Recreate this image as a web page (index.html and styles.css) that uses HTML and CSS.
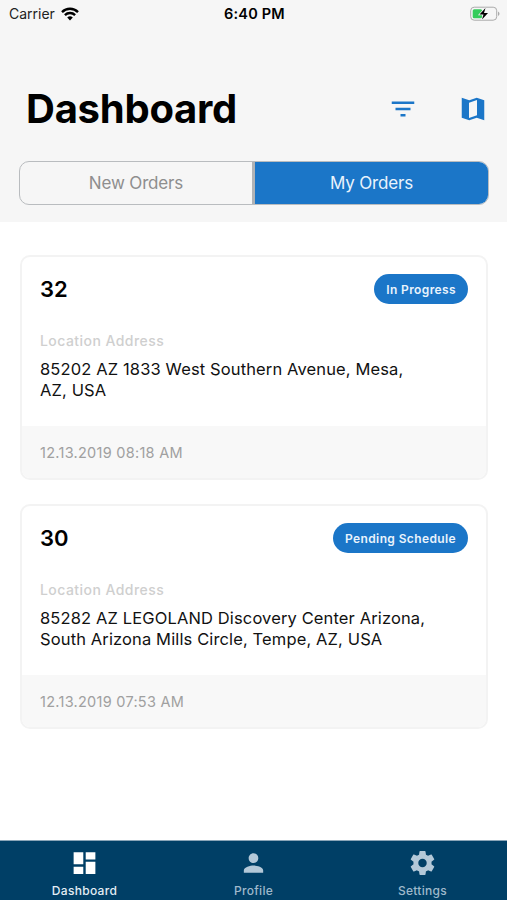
FILE: index.html
```html
<!DOCTYPE html>
<html lang="en">
<head>
  <meta charset="UTF-8">
  <meta name="viewport" content="width=device-width, initial-scale=1.0">
  <title>Dashboard</title>
  <link rel="stylesheet" href="styles.css">
</head>
<body>

  <header class="header">
    <div class="status-bar">
      <div class="carrier">
        <span>Carrier</span>
        <svg class="wifi" viewBox="0 0 18 14">
          <path d="M9 13.6 6.2 10.6a4.2 4.2 0 0 1 5.6 0z"/>
          <path class="arc" d="M3.9 8.1a7.3 7.3 0 0 1 10.2 0M1 5.1a11.4 11.4 0 0 1 16 0"/>
        </svg>
      </div>
      <div class="time">6:40 PM</div>
      <div class="power">
        <svg class="battery" viewBox="0 0 30 16">
          <rect x=".7" y="1.2" width="26" height="13" rx="3.5" fill="none" stroke="#aaa"/>
          <path d="M28 5.5c2 .8 2 3.6 0 4.4z" fill="#aaa"/>
          <rect x="2.7" y="3.2" width="9.5" height="9" rx="1.5" fill="#35cc5b"/>
          <path d="M15.5 2 9.5 8.5h4L12 13.5l6-6.5h-4z" fill="#000" stroke="#f6f6f6" stroke-width="1.4" paint-order="stroke"/>
        </svg>
      </div>
    </div>

    <div class="title-row">
      <h1>Dashboard</h1>
      <div class="actions">
        <svg class="icon" viewBox="0 0 24 24"><path d="M10 18h4v-2h-4v2zM3 6v2h18V6H3zm3 7h12v-2H6v2z"/></svg>
        <svg class="icon" viewBox="0 0 24 24"><path d="M3 3 9 5l6-2 6 2v16l-6-2-6 2-6-2zM8.8 6.9v12.2l6.4-2.1V4.8z" fill-rule="evenodd"/></svg>
      </div>
    </div>

    <div class="tabs">
      <div class="tab">New Orders</div>
      <div class="tab active">My Orders</div>
    </div>
  </header>

  <main class="orders">
    <div class="card">
      <div class="card-body">
        <div class="card-top">
          <h2>32</h2>
          <span class="badge">In Progress</span>
        </div>
        <div class="label">Location Address</div>
        <div class="address">85202 AZ 1833 West Southern Avenue, Mesa,<br>AZ, USA</div>
      </div>
      <div class="card-footer">12.13.2019 08:18 AM</div>
    </div>

    <div class="card">
      <div class="card-body">
        <div class="card-top">
          <h2>30</h2>
          <span class="badge">Pending Schedule</span>
        </div>
        <div class="label">Location Address</div>
        <div class="address">85282 AZ LEGOLAND Discovery Center Arizona,<br>South Arizona Mills Circle, Tempe, AZ, USA</div>
      </div>
      <div class="card-footer">12.13.2019 07:53 AM</div>
    </div>
  </main>

  <nav class="nav">
    <div class="nav-item active">
      <svg viewBox="0 0 24 24"><path d="M3 13h8V3H3v10zm0 8h8v-6H3v6zm10 0h8V11h-8v10zm0-18v6h8V3h-8z"/></svg>
      <span>Dashboard</span>
    </div>
    <div class="nav-item">
      <svg viewBox="0 0 24 24"><path d="M12 12c2.210 0 4-1.790 4-4s-1.790-4-4-4-4 1.790-4 4 1.790 4 4 4zm0 2c-2.670 0-8 1.340-8 4v2h16v-2c0-2.660-5.330-4-8-4z"/></svg>
      <span>Profile</span>
    </div>
    <div class="nav-item">
      <svg viewBox="0 0 24 24"><path d="M19.430 12.980c.04-.32.07-.64.07-.98s-.03-.66-.07-.98l2.110-1.650c.19-.15.24-.42.12-.64l-2-3.460c-.12-.22-.39-.3-.61-.22l-2.490 1c-.52-.4-1.080-.73-1.690-.98l-.38-2.650C14.460 2.180 14.250 2 14 2h-4c-.25 0-.46.18-.49.42l-.38 2.650c-.61.25-1.170.59-1.690.98l-2.490-1c-.23-.09-.49 0-.61.22l-2 3.460c-.13.22-.07.49.12.64l2.110 1.650c-.04.32-.07.65-.07.98s.03.66.07.98l-2.110 1.650c-.19.15-.24.42-.12.64l2 3.460c.12.22.39.3.61.22l2.490-1c.52.4 1.080.73 1.690.98l.38 2.650c.03.24.24.42.49.42h4c.25 0 .46-.18.49-.42l.38-2.650c.61-.25 1.170-.59 1.690-.98l2.490 1c.23.09.49 0 .61-.22l2-3.460c.12-.22.07-.49-.12-.64l-2.110-1.650zM12 15.500c-1.930 0-3.500-1.570-3.500-3.500s1.570-3.500 3.500-3.500 3.500 1.570 3.500 3.500-1.570 3.500-3.500 3.500z"/></svg>
      <span>Settings</span>
    </div>
  </nav>

</body>
</html>
```
FILE: styles.css
```css
* {
  box-sizing: border-box;
}

body {
  font-family: Inter, "Liberation Sans", sans-serif;
  margin: 0;
  height: 100vh;
  display: flex;
  flex-direction: column;
  background-color: #fff;
  color: #000;
  overflow: hidden;
}

h1,
h2 {
  margin: 0;
}

.header {
  height: 222px;
  background-color: #f6f6f6;
}

.status-bar {
  display: grid;
  grid-template-columns: 1fr auto 1fr;
  align-items: center;
  height: 27px;
  padding: 0 7px 0 9px;
  font-size: 14px;
}

.carrier {
  display: flex;
  align-items: center;
  gap: 6px;
  color: #222;
}

.wifi {
  width: 18px;
  height: 14px;
}

.wifi .arc {
  fill: none;
  stroke: #000;
  stroke-width: 2.4;
}

.time {
  font-size: 14.5px;
  font-weight: 600;
  letter-spacing: 0.2px;
}

.power {
  display: flex;
  justify-content: flex-end;
}

.battery {
  width: 30px;
  height: 16px;
}

.title-row {
  display: flex;
  justify-content: space-between;
  align-items: center;
  height: 50px;
  margin-top: 57px;
  padding: 0 19px 0 26px;
}

h1 {
  font-size: 40px;
  font-weight: 700;
  line-height: 50px;
  letter-spacing: -0.25px;
}

.actions {
  display: flex;
  gap: 40px;
}

.icon {
  width: 30px;
  height: 30px;
  fill: #1b76c8;
}

.tabs {
  display: flex;
  height: 44px;
  margin: 27px 18px 0 19px;
  border: 1px solid #b9bcbf;
  border-radius: 10px;
  overflow: hidden;
}

.tab {
  width: 232px;
  text-align: center;
  font-size: 17px;
  line-height: 43px;
  letter-spacing: -0.15px;
  color: #8e8e8e;
}

.tab.active {
  flex: 1;
  background-color: #1b76c8;
  color: #e9f3fc;
  border-left: 3px solid #b0b3b6;
}

.orders {
  flex: 1;
  padding: 33px 19px 0 20px;
}

.card {
  height: 225px;
  margin-bottom: 24px;
  border: 2px solid #f3f3f3;
  border-radius: 10px;
  overflow: hidden;
}

.card-body {
  height: 169px;
  padding: 17px 18px 0;
}

.card-top {
  display: flex;
  justify-content: space-between;
  align-items: center;
  height: 30px;
}

h2 {
  font-size: 22px;
  font-weight: 600;
}

.badge {
  height: 30px;
  padding: 0 12px;
  border-radius: 15px;
  background-color: #1b76c8;
  color: #e9f3fc;
  font-size: 12px;
  font-weight: 600;
  line-height: 31px;
  letter-spacing: 0.38px;
}

.label {
  margin-top: 27px;
  font-size: 14px;
  font-weight: 500;
  line-height: 20px;
  letter-spacing: 0.45px;
  color: #cfcfcf;
}

.address {
  margin-top: 8px;
  font-size: 16.5px;
  line-height: 20.5px;
  letter-spacing: 0.13px;
  white-space: nowrap;
  color: #111;
}

.card-footer {
  height: 52px;
  padding-left: 18px;
  background-color: #f8f8f8;
  font-size: 14.5px;
  line-height: 54px;
  letter-spacing: 0.27px;
  color: #a0a0a0;
}

.nav {
  display: flex;
  height: 60px;
  border-top: 1px solid #8aa5b8;
  background-color: #003f66;
}

.nav-item {
  flex: 1;
  display: flex;
  flex-direction: column;
  align-items: center;
  padding-top: 7px;
  font-size: 12px;
  font-weight: 500;
  letter-spacing: 0.3px;
  line-height: 16px;
  color: #9fb9cb;
}

.nav-item svg {
  width: 29px;
  height: 30px;
  margin-bottom: 5px;
  fill: #b3c8d8;
}

.nav-item.active {
  color: #e4eef5;
}

.nav-item.active svg {
  fill: #fff;
}
```
